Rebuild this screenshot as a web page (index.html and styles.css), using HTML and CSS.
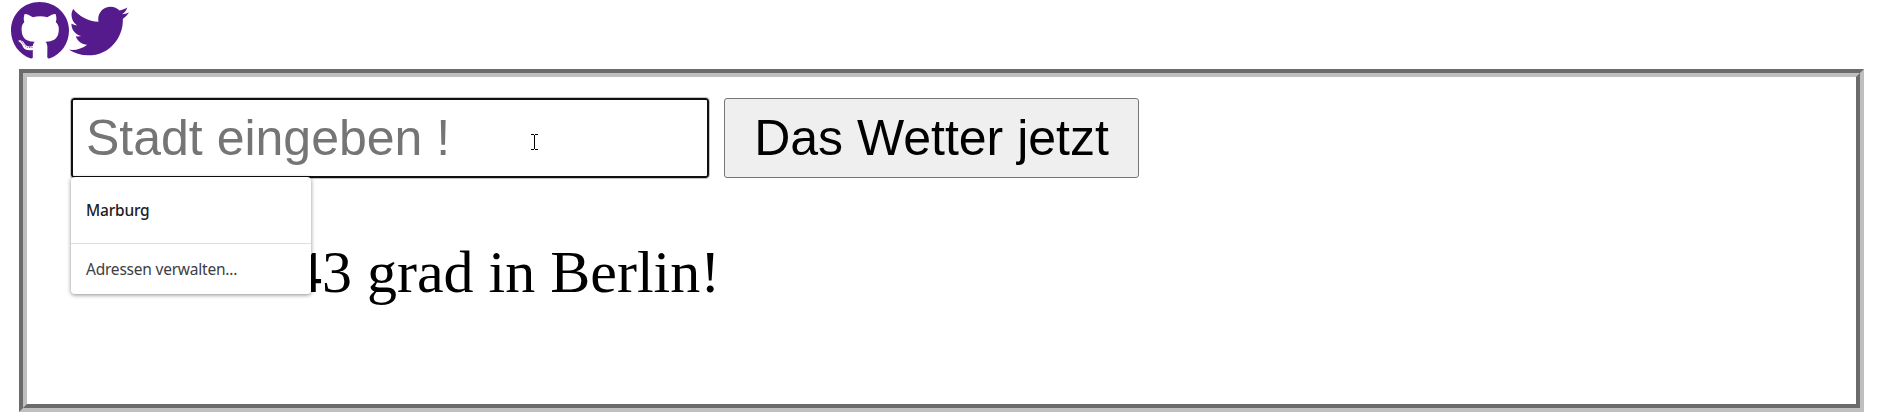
FILE: index.html
```html
<!DOCTYPE html>
<html lang="de">
<head>
<meta charset="utf-8">
<title>Wetter</title>
<link rel="stylesheet" href="styles.css">
</head>
<body>
<nav class="social">
<svg class="github" viewBox="0 0 496 512" aria-label="GitHub"><path d="M165.9 397.4c0 2-2.3 3.6-5.2 3.6-3.3.3-5.6-1.3-5.6-3.6 0-2 2.3-3.6 5.2-3.6 3-.3 5.6 1.3 5.6 3.6zm-31.1-4.5c-.7 2 1.3 4.3 4.3 4.9 2.6 1 5.6 0 6.2-2s-1.3-4.3-4.3-5.2c-2.6-.7-5.5.3-6.2 2.3zm44.2-1.7c-2.9.7-4.9 2.6-4.6 4.9.3 2 2.9 3.3 5.9 2.6 2.9-.7 4.9-2.6 4.6-4.6-.3-1.9-3-3.2-5.9-2.9zM244.8 8C106.1 8 0 113.3 0 252c0 110.9 69.8 205.8 169.5 239.2 12.8 2.3 17.3-5.6 17.3-12.1 0-6.2-.3-40.4-.3-61.4 0 0-70 15-84.7-29.8 0 0-11.4-29.1-27.8-36.6 0 0-22.9-15.7 1.6-15.4 0 0 24.9 2 38.6 25.8 21.9 38.6 58.6 27.5 72.9 20.9 2.3-16 8.8-27.1 16-33.7-55.9-6.2-112.3-14.3-112.3-110.5 0-27.5 7.6-41.3 23.6-58.9-2.6-6.5-11.1-33.3 2.6-67.9 20.9-6.5 69 27 69 27 20-5.6 41.5-8.5 62.8-8.5s42.8 2.9 62.8 8.5c0 0 48.1-33.6 69-27 13.7 34.7 5.2 61.4 2.6 67.9 16 17.7 25.8 31.5 25.8 58.9 0 96.5-58.9 104.2-114.8 110.5 9.2 7.9 17 22.9 17 46.4 0 33.7-.3 75.4-.3 83.6 0 6.5 4.6 14.4 17.3 12.1C428.2 457.8 496 362.9 496 252 496 113.3 383.5 8 244.8 8zM97.2 352.9c-1.3 1-1 3.3.7 5.2 1.6 1.6 3.9 2.3 5.2 1 1.3-1 1-3.3-.7-5.2-1.6-1.6-3.9-2.3-5.2-1zm-10.8-8.1c-.7 1.3.3 2.9 2.3 3.9 1.6 1 3.6.7 4.3-.7.7-1.3-.3-2.9-2.3-3.9-2-.6-3.6-.3-4.3.7zm32.4 35.6c-1.6 1.3-1 4.3 1.3 6.2 2.3 2.3 5.2 2.6 6.5 1 1.3-1.3.7-4.3-1.3-6.2-2.2-2.3-5.2-2.6-6.5-1zm-11.4-14.7c-1.6 1-1.6 3.6 0 5.9 1.6 2.3 4.3 3.3 5.6 2.3 1.6-1.3 1.6-3.9 0-6.2-1.4-2.3-4-3.3-5.6-2z"/></svg>
<svg class="twitter" viewBox="0 0 512 512" aria-label="Twitter"><path d="M459.37 151.716c.325 4.548.325 9.097.325 13.645 0 138.72-105.583 298.558-298.558 298.558-59.452 0-114.68-17.219-161.137-47.106 8.447.974 16.568 1.299 25.34 1.299 49.055 0 94.213-16.568 130.274-44.832-46.132-.975-84.792-31.188-98.112-72.772 6.498.974 12.995 1.624 19.818 1.624 9.421 0 18.843-1.3 27.614-3.573-48.081-9.747-84.143-51.98-84.143-102.985v-1.299c13.969 7.797 30.214 12.67 47.431 13.319-28.264-18.843-46.781-51.005-46.781-87.391 0-19.492 5.197-37.36 14.294-52.954 51.655 63.675 129.3 105.258 216.365 109.807-1.624-7.797-2.599-15.918-2.599-24.04 0-57.828 46.782-104.934 104.934-104.934 30.213 0 57.502 12.67 76.67 33.137 23.715-4.548 46.456-13.32 66.599-25.34-7.798 24.366-24.366 44.833-46.132 57.827 21.117-2.273 41.584-8.122 60.426-16.243-14.292 20.791-32.161 39.308-52.628 54.253z"/></svg>
</nav>
<main class="frame">
<div class="panel">
<div class="search">
<div class="field">
<input class="city" type="text" placeholder="Stadt eingeben !">
<div class="suggestions">
<div class="entry">Marburg</div>
<div class="manage">Adressen verwalten...</div>
</div>
<svg class="cursor" viewBox="0 0 7 16" shape-rendering="crispEdges"><path d="M0 0h3v1H0zM4 0h3v1H4zM3 1h1v14H3zM0 15h3v1H0zM4 15h3v1H4z"/></svg>
</div>
<button class="submit" type="button">Das Wetter jetzt</button>
</div>
<p class="result">43 grad in Berlin!</p>
</div>
</main>
</body>
</html>
```
FILE: styles.css
```css
* { box-sizing: border-box; }
body { margin: 0; background: #fff; color: #000; font-family: "Liberation Serif", "Times New Roman", serif; }
.social { display: flex; height: 69px; padding: 1px 0 0 11px; }
.social svg { height: 60px; fill: #551a8b; }
.github { width: 58px; }
.twitter { width: 60px; }
.frame { width: 1845px; height: 343px; margin-left: 19px; border: 4px solid; border-color: #6b6b6b #bfbfbf #bfbfbf #6b6b6b; }
.panel { height: 100%; border: 4px solid; border-color: #bfbfbf #6b6b6b #6b6b6b #bfbfbf; padding: 21px 0 0 44px; }
.search { display: flex; gap: 15px; height: 80px; }
.field { position: relative; width: 638px; }
.city { display: block; width: 100%; height: 80px; margin: 0; padding: 0 13px; border: 2px solid #101010; border-radius: 3px; outline: 1px solid #c4c4c4; background: #fff; font: 50px "Liberation Sans", Arial, sans-serif; }
.city::placeholder { color: #757575; opacity: 1; }
.submit { width: 415px; height: 80px; margin: 0; padding: 0; border: 1px solid #767676; border-radius: 3px; background: #efefef; color: #000; font: 50px "Liberation Sans", Arial, sans-serif; }
.result { margin: 60px 0 0 221px; font-size: 60px; line-height: 68px; }
.suggestions { position: absolute; z-index: 1; top: 79px; left: 0; width: 240px; height: 117px; border-radius: 4px; background: #fff; box-shadow: 0 1px 4px rgba(0, 0, 0, .45); font: 15.5px "Noto Sans", "Open Sans", sans-serif; letter-spacing: -.22px; color: #202124; }
.entry { height: 67px; padding-left: 15px; border-bottom: 1px solid #dedede; line-height: 66px; font-weight: 500; }
.manage { padding-left: 15px; line-height: 51px; color: #3c4043; }
.cursor { position: absolute; left: 460px; top: 36px; width: 7px; height: 16px; }
```
